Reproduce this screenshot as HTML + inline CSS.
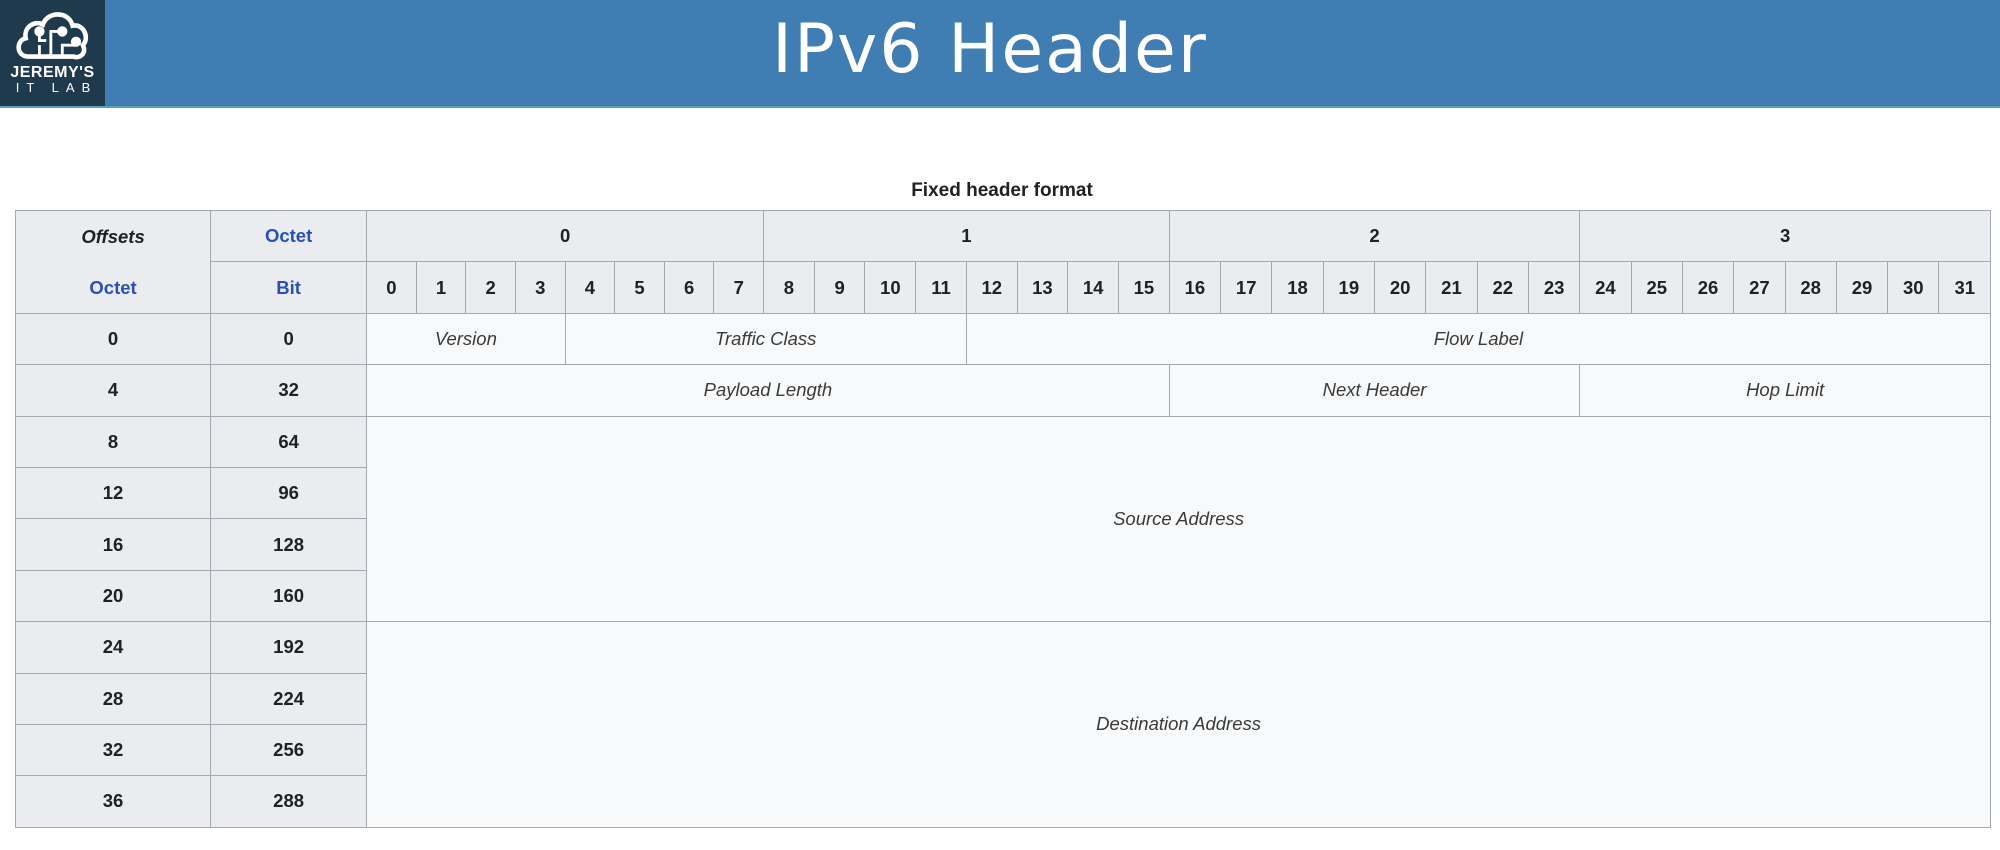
<!DOCTYPE html>
<html><head><meta charset="utf-8"><style>
body{margin:0;width:2000px;height:850px;background:#fff;position:relative;overflow:hidden;font-family:"Liberation Sans",Arial,sans-serif}
#hdr{position:absolute;left:0;top:0;width:2000px;height:106px;background:#3f7db3;border-bottom:2px solid #5a9fb8}
#logo{position:absolute;left:0;top:0;width:105px;height:106px;background:#1f3a4c;color:#fff;text-align:center}
#title{position:absolute;left:772px;top:10px;font-size:68px;color:#fff;font-family:"DejaVu Sans","Liberation Sans",sans-serif;letter-spacing:2px}
#cap{position:absolute;left:0;width:2004px;top:180px;text-align:center;font-weight:bold;font-size:19px;color:#202122}
table{position:absolute;left:15px;top:210px;border-collapse:collapse;table-layout:fixed;width:1976px;font-size:18.5px;color:#202122}
td,th{border:1.5px solid #a2a9b1;padding:0;text-align:center;height:50.4px;overflow:hidden}
th{background:#eaecf0;font-weight:bold}
td{background:#f8f9fa;font-style:italic;color:#3a3a3a}
.b{color:#2a4fb5}
</style></head><body>
<div id="hdr"></div>
<div id="logo">
<svg width="80" height="60" viewBox="0 0 70 52" style="position:absolute;left:12px;top:6px" fill="none" stroke="#fff" stroke-width="4">
<path d="M14 44 C4 44 3 30 12 28 C10 18 20 12 27 16 C31 4 50 4 53 17 C63 15 68 28 62 34 C66 42 58 46 54 44 Z"/>
<path d="M24 44 V34 M34 44 V22 H42 M44 44 V34 H56 M30 30 H24 V24" stroke-width="2.5"/>
<circle cx="24" cy="22" r="2.5" fill="#fff"/><circle cx="44" cy="22" r="2.5" fill="#fff"/><circle cx="56" cy="31" r="2.5" fill="#fff"/>
</svg>
<div style="position:absolute;left:0;width:105px;top:64px;font-size:16px;font-weight:bold;letter-spacing:0.5px">JEREMY'S</div>
<div style="position:absolute;left:4px;width:105px;top:80px;font-size:13px;letter-spacing:7px">IT LAB</div>
</div>
<div id="title">IPv6 Header</div>
<div id="cap">Fixed header format</div>
<table>
<colgroup><col style="width:195px"><col style="width:156px">
<col span="8" style="width:49.6px"><col span="8" style="width:50.7px"><col span="16" style="width:51.3px"></colgroup>
<tr><th rowspan="2" style="position:relative;vertical-align:top"><div style="position:absolute;top:15px;width:100%;font-style:italic">Offsets</div><div class="b" style="position:absolute;top:66px;width:100%">Octet</div></th><th class="b">Octet</th><th colspan="8">0</th><th colspan="8">1</th><th colspan="8">2</th><th colspan="8">3</th></tr>
<tr><th class="b">Bit</th><th>0</th><th>1</th><th>2</th><th>3</th><th>4</th><th>5</th><th>6</th><th>7</th><th>8</th><th>9</th><th>10</th><th>11</th><th>12</th><th>13</th><th>14</th><th>15</th><th>16</th><th>17</th><th>18</th><th>19</th><th>20</th><th>21</th><th>22</th><th>23</th><th>24</th><th>25</th><th>26</th><th>27</th><th>28</th><th>29</th><th>30</th><th>31</th></tr>
<tr><th>0</th><th>0</th><td colspan="4">Version</td><td colspan="8">Traffic Class</td><td colspan="20">Flow Label</td></tr>
<tr><th>4</th><th>32</th><td colspan="16">Payload Length</td><td colspan="8">Next Header</td><td colspan="8">Hop Limit</td></tr>
<tr><th>8</th><th>64</th><td colspan="32" rowspan="4">Source Address</td></tr>
<tr><th>12</th><th>96</th></tr>
<tr><th>16</th><th>128</th></tr>
<tr><th>20</th><th>160</th></tr>
<tr><th>24</th><th>192</th><td colspan="32" rowspan="4">Destination Address</td></tr>
<tr><th>28</th><th>224</th></tr>
<tr><th>32</th><th>256</th></tr>
<tr><th>36</th><th>288</th></tr>
</table>
</body></html>
